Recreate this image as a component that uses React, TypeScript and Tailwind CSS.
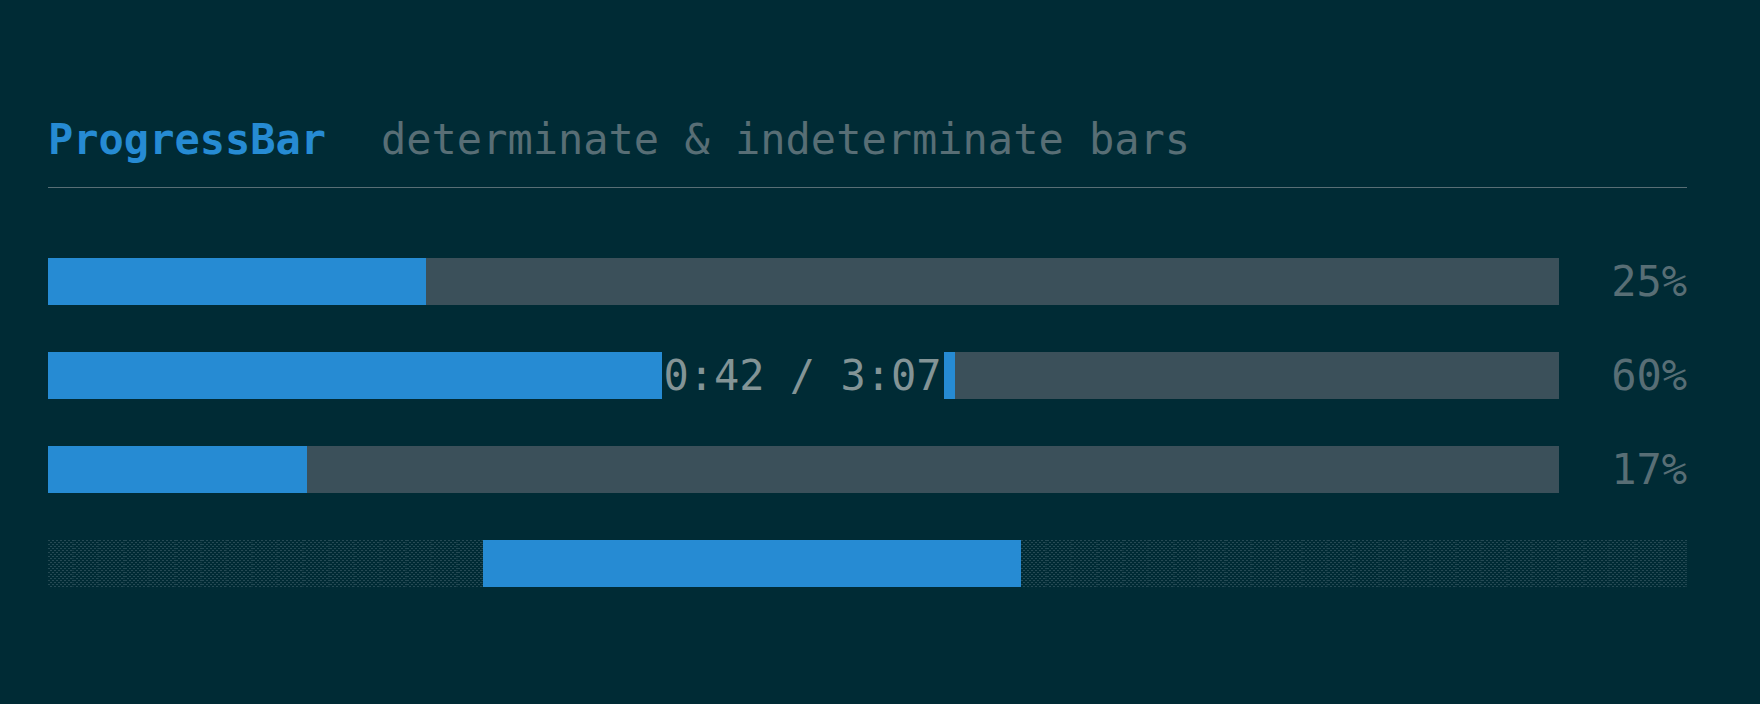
const rows = [
  { name: 'Download', value: 25, label: '' },
  { name: 'Playback', value: 60, label: '0:42 / 3:07' },
  { name: 'Upload', value: 17.15, label: '' },
];

// indeterminate bar, measured in character cells
const CELLS_BEFORE = 17;
const CELLS_AFTER = 26;

function ProgressBar({ name, value, label }: { name: string; value: number; label: string }) {
  return (
    <div className="flex h-[47px] items-center">
      <div
        role="progressbar"
        aria-label={name}
        aria-valuenow={value}
        aria-valuemin={0}
        aria-valuemax={100}
        className="relative h-full flex-1 bg-[#3b505a]"
      >
        <div className="h-full bg-[#268bd3]" style={{ width: `${value}%` }} />
        {label && (
          <span className="absolute inset-y-0 left-[calc(50%-142px)] w-[282px] whitespace-nowrap bg-[#002b35] text-center text-[#839496]">
            {label}
          </span>
        )}
      </div>
      <span className="w-[128px] text-right">{Math.round(value)}%</span>
    </div>
  );
}

// light shade: staggered dots, denser where two cells meet
function Shade({ cells }: { cells: number }) {
  return (
    <>
      {Array.from({ length: cells }, (_, i) => (
        <div
          key={i}
          className="flex-1 [background-image:linear-gradient(#24495380_1px,transparent_0),conic-gradient(from_270deg_at_2px_1px,#254a54_90deg,transparent_0),conic-gradient(from_270deg_at_2px_1px,#254a54_90deg,transparent_0)] [background-position:right_top,0_0,2px_2px] [background-repeat:repeat-y,repeat,repeat] [background-size:2px_2px,4px_4px,4px_4px]"
        />
      ))}
    </>
  );
}

export default function App() {
  return (
    <main className="min-h-screen bg-[#002b35] pt-[116px] pr-[73px] pb-[117px] pl-[48px] font-['DejaVu_Sans_Mono',monospace] text-[42px] leading-[47px] text-[#586e75]">
      <header className="flex gap-[51px] border-b border-[#586e75] pb-[24px]">
        <h1 className="w-[282px] whitespace-nowrap font-bold text-[#268bd3]">ProgressBar</h1>
        <p className="whitespace-nowrap">determinate &amp; indeterminate bars</p>
      </header>

      <section className="mt-[70px] flex flex-col gap-[47px]">
        {rows.map((row) => (
          <ProgressBar key={row.name} {...row} />
        ))}

        <div role="progressbar" aria-label="Loading" className="flex h-[47px]">
          <Shade cells={CELLS_BEFORE} />
          <div className="flex-[21] bg-[#268bd3]" />
          <Shade cells={CELLS_AFTER} />
        </div>
      </section>
    </main>
  );
}
